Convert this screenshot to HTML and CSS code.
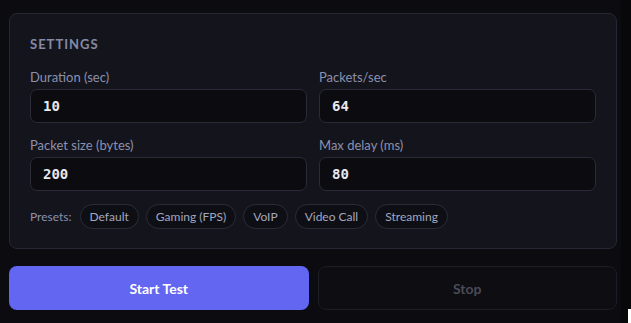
FILE: index.html
```html
<!DOCTYPE html>
<html>
<head>
<meta charset="utf-8">
<link rel="stylesheet" href="styles.css">
</head>
<body>
<div class="shell">
  <main class="main">
    <section class="card">
      <h2 class="title">SETTINGS</h2>
      <div class="grid">
        <label class="field">
          <span class="label">Duration (sec)</span>
          <input class="input" value="10">
        </label>
        <label class="field">
          <span class="label">Packets/sec</span>
          <input class="input" value="64">
        </label>
        <label class="field">
          <span class="label">Packet size (bytes)</span>
          <input class="input" value="200">
        </label>
        <label class="field">
          <span class="label">Max delay (ms)</span>
          <input class="input" value="80">
        </label>
      </div>
      <div class="presets">
        <span class="presets-label">Presets:</span>
        <button class="pill">Default</button>
        <button class="pill">Gaming (FPS)</button>
        <button class="pill">VoIP</button>
        <button class="pill">Video Call</button>
        <button class="pill">Streaming</button>
      </div>
    </section>
    <div class="actions">
      <button class="btn btn-start">Start Test</button>
      <button class="btn btn-stop">Stop</button>
    </div>
  </main>
  <aside class="strip"><span class="mark"></span></aside>
</div>
</body>
</html>
```
FILE: styles.css
```css
* { box-sizing: border-box; }
html, body {
  margin: 0;
  height: 100%;
  background: #0b0b10;
  font-family: Lato, "Noto Sans", sans-serif;
}
.shell {
  display: flex;
  height: 100%;
}
.main {
  width: 621px;
  padding: 13px 4px 0 9px;
}
.strip {
  flex: 1;
  background: #08080b;
  display: flex;
  flex-direction: column;
  justify-content: flex-end;
  align-items: flex-end;
}
.mark {
  width: 3px;
  height: 14px;
  background: #ffffff;
}
.card {
  background: #13141c;
  border: 1px solid #262732;
  border-radius: 8px;
  padding: 20px 20px 19px;
}
.title {
  margin: 0 0 14px;
  font-size: 13px;
  line-height: 20px;
  font-weight: 700;
  letter-spacing: 1px;
  color: #858aa6;
}
.grid {
  display: grid;
  grid-template-columns: 1fr 1fr;
  column-gap: 12px;
  row-gap: 13px;
}
.field {
  display: flex;
  flex-direction: column;
  gap: 3px;
}
.label {
  font-size: 13px;
  line-height: 18px;
  color: #8c91ae;
}
.input {
  height: 34px;
  background: #0b0b10;
  border: 1px solid #2a2b37;
  border-radius: 7px;
  padding: 0 12px;
  font-family: "DejaVu Sans Mono", monospace;
  font-weight: 700;
  font-size: 14px;
  color: #e6e8f0;
  outline: none;
}
.presets {
  display: flex;
  align-items: center;
  gap: 7px;
  margin-top: 13px;
}
.presets-label {
  font-size: 12px;
  color: #8c91ae;
  margin-right: 1px;
}
.pill {
  height: 25px;
  padding: 0 9px;
  background: #0e0f15;
  border: 1px solid #2b2c38;
  border-radius: 13px;
  font-family: inherit;
  font-size: 12px;
  color: #a3a7bf;
}
.actions {
  display: grid;
  grid-template-columns: 1fr 1fr;
  gap: 9px;
  margin-top: 17px;
}
.btn {
  height: 44px;
  border-radius: 8px;
  font-family: inherit;
  font-size: 14px;
  font-weight: 700;
}
.btn-start {
  background: #6366f1;
  border: none;
  color: #ffffff;
}
.btn-stop {
  background: #0d0d12;
  border: 1px solid #1c1d26;
  color: #4a4b56;
}
```
